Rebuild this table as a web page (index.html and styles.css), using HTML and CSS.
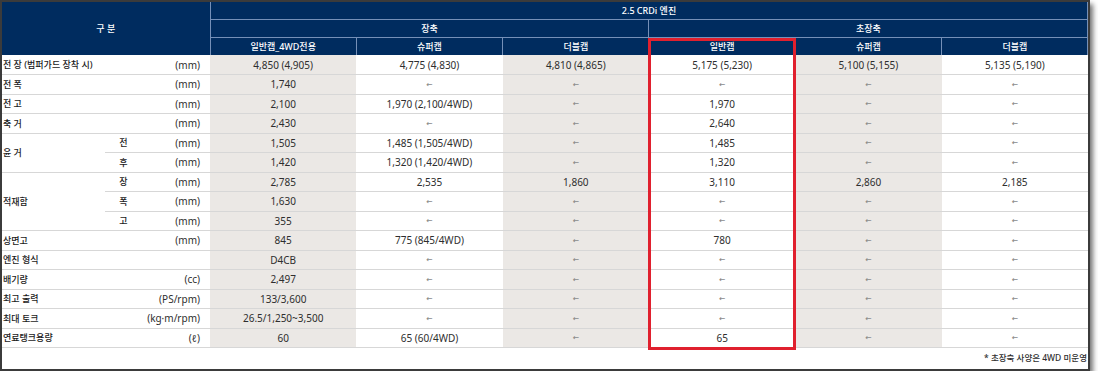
FILE: index.html
```html
<!DOCTYPE html>
<html lang="ko">
<head>
<meta charset="utf-8">
<title>제원</title>
<link rel="stylesheet" href="styles.css">
</head>
<body>
<div class="frame">
  <table class="spec">
    <colgroup>
      <col class="c-label">
      <col class="c-sub">
      <col class="c-unit">
      <col class="c-data shade">
      <col class="c-data">
      <col class="c-data shade">
      <col class="c-data">
      <col class="c-data shade">
      <col class="c-data">
    </colgroup>
    <thead>
      <tr class="h1">
        <th rowspan="3" colspan="3" class="corner">구 분</th>
        <th colspan="6" class="last">2.5 CRDi 엔진</th>
      </tr>
      <tr class="h2">
        <th colspan="3">장축</th>
        <th colspan="3" class="last">초장축</th>
      </tr>
      <tr class="h3">
        <th>일반캡_4WD전용</th>
        <th>슈퍼캡</th>
        <th>더블캡</th>
        <th>일반캡</th>
        <th>슈퍼캡</th>
        <th class="last">더블캡</th>
      </tr>
    </thead>
    <tbody>
      <tr>
        <td colspan="2" class="lbl">전 장 (범퍼가드 장착 시)</td><td class="unit">(mm)</td>
        <td>4,850 (4,905)</td><td>4,775 (4,830)</td><td>4,810 (4,865)</td><td>5,175 (5,230)</td><td>5,100 (5,155)</td><td>5,135 (5,190)</td>
      </tr>
      <tr>
        <td colspan="2" class="lbl">전 폭</td><td class="unit">(mm)</td>
        <td>1,740</td><td class="arr">←</td><td class="arr">←</td><td class="arr">←</td><td class="arr">←</td><td class="arr">←</td>
      </tr>
      <tr>
        <td colspan="2" class="lbl">전 고</td><td class="unit">(mm)</td>
        <td>2,100</td><td>1,970 (2,100/4WD)</td><td class="arr">←</td><td>1,970</td><td class="arr">←</td><td class="arr">←</td>
      </tr>
      <tr>
        <td colspan="2" class="lbl">축 거</td><td class="unit">(mm)</td>
        <td>2,430</td><td class="arr">←</td><td class="arr">←</td><td>2,640</td><td class="arr">←</td><td class="arr">←</td>
      </tr>
      <tr>
        <td rowspan="2" class="lbl">윤 거</td><td class="sub">전</td><td class="unit">(mm)</td>
        <td>1,505</td><td>1,485 (1,505/4WD)</td><td class="arr">←</td><td>1,485</td><td class="arr">←</td><td class="arr">←</td>
      </tr>
      <tr>
        <td class="sub">후</td><td class="unit">(mm)</td>
        <td>1,420</td><td>1,320 (1,420/4WD)</td><td class="arr">←</td><td>1,320</td><td class="arr">←</td><td class="arr">←</td>
      </tr>
      <tr>
        <td rowspan="3" class="lbl">적재함</td><td class="sub">장</td><td class="unit">(mm)</td>
        <td>2,785</td><td>2,535</td><td>1,860</td><td>3,110</td><td>2,860</td><td>2,185</td>
      </tr>
      <tr>
        <td class="sub">폭</td><td class="unit">(mm)</td>
        <td>1,630</td><td class="arr">←</td><td class="arr">←</td><td class="arr">←</td><td class="arr">←</td><td class="arr">←</td>
      </tr>
      <tr>
        <td class="sub">고</td><td class="unit">(mm)</td>
        <td>355</td><td class="arr">←</td><td class="arr">←</td><td class="arr">←</td><td class="arr">←</td><td class="arr">←</td>
      </tr>
      <tr>
        <td colspan="2" class="lbl">상면고</td><td class="unit">(mm)</td>
        <td>845</td><td>775 (845/4WD)</td><td class="arr">←</td><td>780</td><td class="arr">←</td><td class="arr">←</td>
      </tr>
      <tr>
        <td colspan="2" class="lbl">엔진 형식</td><td class="unit"></td>
        <td>D4CB</td><td class="arr">←</td><td class="arr">←</td><td class="arr">←</td><td class="arr">←</td><td class="arr">←</td>
      </tr>
      <tr>
        <td colspan="2" class="lbl">배기량</td><td class="unit">(cc)</td>
        <td>2,497</td><td class="arr">←</td><td class="arr">←</td><td class="arr">←</td><td class="arr">←</td><td class="arr">←</td>
      </tr>
      <tr>
        <td colspan="2" class="lbl">최고 출력</td><td class="unit">(PS/rpm)</td>
        <td>133/3,600</td><td class="arr">←</td><td class="arr">←</td><td class="arr">←</td><td class="arr">←</td><td class="arr">←</td>
      </tr>
      <tr>
        <td colspan="2" class="lbl">최대 토크</td><td class="unit">(kg·m/rpm)</td>
        <td>26.5/1,250~3,500</td><td class="arr">←</td><td class="arr">←</td><td class="arr">←</td><td class="arr">←</td><td class="arr">←</td>
      </tr>
      <tr>
        <td colspan="2" class="lbl">연료탱크용량</td><td class="unit">(ℓ)</td>
        <td>60</td><td>65 (60/4WD)</td><td class="arr">←</td><td>65</td><td class="arr">←</td><td class="arr">←</td>
      </tr>
    </tbody>
  </table>
  <p class="note">* 초장축 사양은 4WD 미운영</p>
  <div class="highlight"></div>
</div>
</body>
</html>
```

FILE: styles.css
```css
html, body {
  margin: 0;
  padding: 0;
  background: #ffffff;
}

body {
  font-family: "Noto Sans", "Noto Sans CJK KR", sans-serif;
  color: #333333;
}

.frame {
  position: relative;
  width: 1086px;
  height: 367px;
  border: 2px solid #3b3b3b;
  background: #ffffff;
  box-shadow: 3px 4px 5px rgba(0, 0, 0, 0.55);
  overflow: hidden;
}

.spec {
  width: 1086px;
  border-collapse: collapse;
  table-layout: fixed;
}

.c-label { width: 103px; }
.c-sub { width: 35px; }
.c-unit { width: 70px; }
.c-data { width: 146.33px; }
.shade { background: #ebe8e5; }

.spec th {
  background: #002c5f;
  color: #ffffff;
  font-weight: 500;
  font-size: 9px;
  padding: 0;
  text-align: center;
  vertical-align: middle;
  border-right: 1px solid #7590b8;
  border-bottom: 1px solid #7590b8;
}

.spec .h3 th { border-bottom: none; }
.spec th.corner { border-bottom: none; }

.h1 { height: 17px; }
.h2 { height: 18px; }
.h3 { height: 18px; }

.spec tbody tr { height: 19.5px; }

.spec td {
  padding: 0;
  font-size: 10px;
  text-align: center;
  vertical-align: middle;
  color: #2e2e2e;
  border-bottom: 1px solid #d7d7d7;
  white-space: nowrap;
}

.spec td.lbl {
  text-align: left;
  padding-left: 1px;
  font-size: 9px;
  font-weight: 500;
  color: #1a1a1a;
  background: #ffffff;
}

.spec td.sub {
  font-size: 9px;
  font-weight: 500;
  color: #1a1a1a;
  background: #ffffff;
  padding-left: 2px;
}

.spec td.unit {
  text-align: right;
  padding-right: 10px;
  color: #2e2e2e;
  background: #ffffff;
}

.spec td.arr {
  font-family: "DejaVu Sans", sans-serif;
  font-size: 7.5px;
  font-weight: bold;
  color: #8c8c8c;
}

.note {
  margin: 0;
  height: 20px;
  line-height: 20px;
  text-align: right;
  font-size: 8.5px;
  font-weight: 500;
  color: #2e2e2e;
  padding-right: 1px;
}

.highlight {
  position: absolute;
  left: 646px;
  top: 36px;
  width: 142px;
  height: 306px;
  border: 3px solid #e0202e;
  pointer-events: none;
}
```
